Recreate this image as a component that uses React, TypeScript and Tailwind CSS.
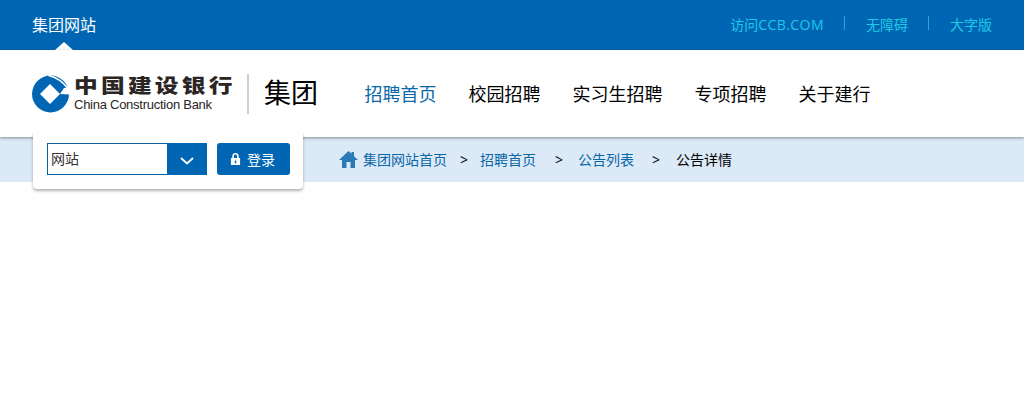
import React from "react";

const font = { fontFamily: '"Open Sans", "Noto Sans CJK SC", sans-serif' };

const navItems = ["招聘首页", "校园招聘", "实习生招聘", "专项招聘", "关于建行"];

function CcbMark() {
  return (
    <svg width="37" height="38" viewBox="0 0 37 38" className="shrink-0">
      <circle cx="18.5" cy="19" r="18.5" fill="#0066b3" />
      <path d="M18 9 L28 19 L18 29 L8 19 Z" fill="#fff" />
      <path d="M28 19 L38 19.5 L38 12.5 L32 13 Z" fill="#fff" />
      <path d="M16.5 0.5 C24 2 31 7 36.5 14" stroke="#fff" strokeWidth="1.6" fill="none" />
    </svg>
  );
}

function Separator() {
  return <span className="mr-[21px] mb-[3px] ml-[20px] h-[14px] w-px bg-[#2fa3d6]" />;
}

export default function App() {
  return (
    <div className="relative h-[400px] w-[1024px] overflow-hidden bg-white" style={font}>
      {/* Top bar */}
      <div className="flex h-[50px] items-center justify-between bg-[#0066b3] px-[32px]">
        <div className="relative flex h-full items-center text-[16px] text-white">
          集团网站
          <span className="absolute bottom-0 left-[23px] h-0 w-0 border-x-[9px] border-b-[8px] border-x-transparent border-b-white" />
        </div>
        <div className="mb-[2px] flex items-center text-[14px] text-[#1fc8e8]">
          <span>
            访问<span className="tracking-[0.45px]">CCB.COM</span>
          </span>
          <Separator />
          <span>无障碍</span>
          <Separator />
          <span>大字版</span>
        </div>
      </div>

      {/* Main nav */}
      <div className="relative z-10 flex h-[87px] items-center bg-white pl-[32px] shadow-[0_1px_3px_rgba(0,0,0,0.4)]">
        <CcbMark />
        <div className="ml-[5px] flex w-[161px] flex-col gap-[2px]">
          <span className="origin-left scale-x-[1.25] whitespace-nowrap text-[19px] leading-[19px] font-black tracking-[2.55px] text-[#2b2523]">
            中国建设银行
          </span>
          <span
            className="whitespace-nowrap text-[13px] leading-[13px] tracking-[-0.26px] text-[#2b2523]"
            style={{ fontFamily: '"Liberation Sans", sans-serif' }}
          >
            China Construction Bank
          </span>
        </div>
        <span className="ml-[12px] h-[40px] w-[2px] bg-[#cfcfcf]" />
        <span className="ml-[15px] text-[27px] text-black">集团</span>
        <nav className="mt-[2px] ml-[46.5px] flex items-center gap-[32px] text-[18px]">
          {navItems.map((item, i) => (
            <a key={item} className={i === 0 ? "text-[#0a67a8]" : "text-black"}>
              {item}
            </a>
          ))}
        </nav>
      </div>

      {/* Breadcrumb */}
      <div className="flex h-[45px] items-center bg-[#dce9f7] pl-[339px] text-[14px] text-[#0a67a8]">
        <svg width="19" height="17" viewBox="0 0 19 17" className="mr-[5px]">
          <path d="M9.5 0 L12.5 2.8 L12.5 1 L15 1 L15 5.2 L19 9 L16 9 L16 17 L11.5 17 L11.5 11 L7.5 11 L7.5 17 L3 17 L3 9 L0 9 Z" fill="#2a7ab8" />
        </svg>
        <a>集团网站首页</a>
        <span className="mr-[12px] ml-[13px] text-black">&gt;</span>
        <a>招聘首页</a>
        <span className="mr-[15px] ml-[19px] text-black">&gt;</span>
        <a>公告列表</a>
        <span className="mr-[16px] ml-[18px] text-black">&gt;</span>
        <a className="text-black">公告详情</a>
      </div>

      {/* Login card sits over the nav and breadcrumb */}
      <div className="absolute top-[132px] left-[33px] z-20 flex h-[57px] w-[270px] items-start gap-[10px] rounded-b-[4px] bg-white pt-[11px] pl-[14px] shadow-[0_2px_3px_rgba(0,0,0,0.3)]">
        <div className="flex h-[32px] w-[160px] border border-r-0 border-[#0a5f9e]">
          <span className="flex-1 pl-[3px] text-[14px] leading-[30px] text-[#333]">网站</span>
          <span className="-my-px flex w-[40px] items-center justify-center bg-[#0066b3]">
            <svg width="14" height="8" viewBox="0 0 14 8" className="mt-[3px]">
              <path d="M1 1 L7 6.5 L13 1" stroke="#fff" strokeWidth="1.8" fill="none" />
            </svg>
          </span>
        </div>
        <button className="flex h-[32px] w-[73px] items-center justify-center gap-[6px] rounded-[3px] bg-[#0066b3] pr-[2px] text-[14px] text-white">
          <svg width="11" height="14" viewBox="0 0 12 14">
            <path
              fillRule="evenodd"
              d="M1 6 L2.5 6 L2.5 4 C2.5 1.6 4 0.5 6 0.5 C8 0.5 9.5 1.6 9.5 4 L9.5 6 L11 6 L11 13.5 L1 13.5 Z M4.3 6 L7.7 6 L7.7 4 C7.7 2.8 7 2.2 6 2.2 C5 2.2 4.3 2.8 4.3 4 Z M5.2 8.5 L5.2 11.5 L6.8 11.5 L6.8 8.5 Z"
              fill="#fff"
            />
          </svg>
          登录
        </button>
      </div>
    </div>
  );
}
